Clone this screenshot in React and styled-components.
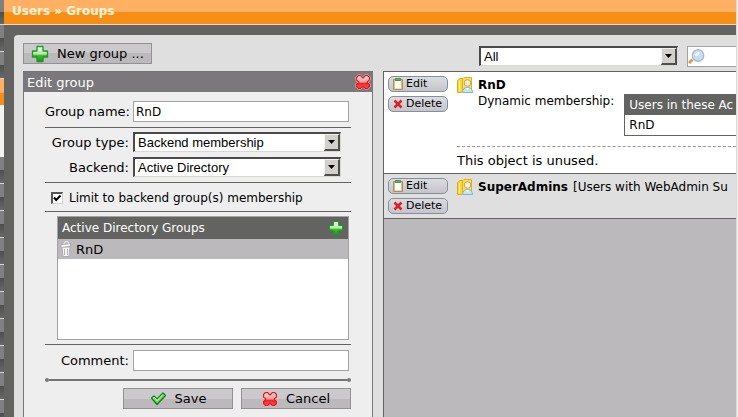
import React, { useState } from "react";
import styled, { createGlobalStyle } from "styled-components";

const GlobalStyle = createGlobalStyle`
  *, *::before, *::after { box-sizing: border-box; }
  html, body { margin: 0; background: #636361; overflow: hidden; }
  body, button, input, select { font-family: "DejaVu Sans", Verdana, sans-serif; font-size: 13px; color: #000; }
`;

const Page = styled.div`
  display: grid;
  grid-template-columns: 4px minmax(0, 1fr) 2px;
  height: 100vh;
`;
const Rail = styled.nav`
  display: flex;
  flex-direction: column;
  overflow: hidden;
`;
const RailTab = styled.span`
  flex: none;
  height: ${(p) => (p.$first ? "25px" : p.$active ? "26px" : "27px")};
  border-bottom: ${(p) => (p.$active ? "0" : "1px solid #d6d6d6")};
  background: ${(p) =>
    p.$active
      ? "linear-gradient(#ffb066 55%, #f78d14 55%)"
      : "linear-gradient(#808082 50%, #4e4e4e 50%, #686868)"};
`;
const RailGap = styled.span`
  flex: none;
  height: 52px;
  background: #f2f2f2;
`;
const Edge = styled.div`
  background: #f0f0ee;
  border-left: 1px solid #dcdcdc;
`;
const Column = styled.div`
  display: flex;
  flex-direction: column;
  overflow: hidden;
`;
const TitleBar = styled.header`
  flex: none;
  height: 25px;
  padding: 0 8px;
  border-bottom: 1px solid #e8d9c8;
  background: linear-gradient(#ffb062 12px, #f88f15 12px);
`;
const Title = styled.h1`
  margin: 0;
  font: bold 12px/22px "DejaVu Sans", sans-serif;
  color: #fff3da;
`;
const Main = styled.main`
  flex: 1;
  display: grid;
  grid-template-columns: 350px minmax(0, 1fr);
  grid-template-rows: 36px minmax(0, 1fr);
  column-gap: 10px;
  margin: 10px 0 0 10px;
  padding-left: 9px;
  background: #dfdfdf;
  border-top-left-radius: 4px;
`;
const Tools = styled.div`
  display: flex;
  align-items: flex-start;
  gap: 9px;
  padding: ${(p) => (p.$filters ? "11px 0 0 96px" : "8px 0 0")};
`;
const Button = styled.button`
  display: flex;
  align-items: center;
  justify-content: center;
  gap: 8px;
  height: 21px;
  width: ${(p) => (p.$wide ? "129px" : "110px")};
  padding: 0;
  border: 1px solid #929292;
  background: linear-gradient(#cbc9cb 50%, #bbb9bb 50%);
  white-space: nowrap;
  svg { flex: none; }
`;
const Panel = styled.form`
  display: flex;
  flex-direction: column;
  border: 1px solid #777;
  border-top-color: #757375;
  border-bottom: 0;
  background: #eee;
`;
const PanelHead = styled.div`
  display: flex;
  flex: none;
  align-items: center;
  justify-content: space-between;
  height: 20px;
  padding: 0 1px 0 3px;
  background: #7a787a;
  color: #fff;
`;
const IconButton = styled.button`
  display: flex;
  padding: 0;
  border: 0;
  background: none;
`;
const Fields = styled.div`
  display: flex;
  flex-direction: column;
  margin: 0 21px;
`;
const Section = styled.div`
  display: flex;
  flex-direction: column;
  gap: 5px;
  padding: ${(p) => p.$pad || "5px 0"};
  border-bottom: 1px solid #636361;
`;
const Field = styled.div`
  display: grid;
  grid-template-columns: 84px minmax(0, 1fr);
  align-items: center;
  column-gap: 4px;
  padding-top: ${(p) => (p.$last ? "5px" : "0")};
  padding-right: ${(p) => (p.$short ? "10px" : "2px")};
`;
const Label = styled.label`
  text-align: right;
  white-space: nowrap;
`;
const TextBox = styled.input`
  width: 100%;
  height: 21px;
  padding: 0 2px;
  border: 1px solid #a3a3a3;
  background: #fff;
  font-size: 12px;
`;
const SelectFrame = styled.span`
  position: relative;
  display: block;
  width: ${(p) => (p.$filter ? "199px" : "100%")};
  height: 20px;
  border: 1px solid #d8d8d4;
  border-top: 2px solid #4a4a4a;
  border-left: 2px solid #4a4a4a;
  background: #fff;
`;
const Select = styled.select`
  display: block;
  width: 100%;
  height: 100%;
  padding: 0 18px 0 3px;
  border: 0;
  background: transparent;
  appearance: none;
  font: 13px "Liberation Sans", Arial, sans-serif;
`;
const Arrow = styled.span`
  position: absolute;
  inset: 0 0 0 auto;
  width: 16px;
  display: flex;
  align-items: center;
  justify-content: center;
  border: 1px solid #f2f2f0;
  border-right: 2px solid #4e4e4e;
  border-bottom: 2px solid #4e4e4e;
  background: #d2d0cb;
  pointer-events: none;
`;
const CheckRow = styled.label`
  display: flex;
  align-items: center;
  gap: 6px;
  height: 18px;
  padding-left: 6px;
  font-size: 12px;
  white-space: nowrap;
`;
const CheckFrame = styled.span`
  display: grid;
  width: 12px;
  height: 12px;
  > * { grid-area: 1 / 1; }
`;
const Check = styled.input`
  width: 12px;
  height: 12px;
  margin: 0;
  appearance: none;
  background: #fff;
  border: 1px solid #d4d4d0;
  border-top: 2px solid #555;
  border-left: 2px solid #555;
  & + svg { visibility: hidden; pointer-events: none; }
  &:checked + svg { visibility: visible; }
`;
const ListBox = styled.div`
  min-height: 124px;
  margin: 0 2px 0 12px;
  border: 1px solid #a3a3a3;
  background: #fff;
`;
const ListHead = styled.div`
  display: flex;
  align-items: center;
  justify-content: space-between;
  height: 22px;
  padding: 0 4px;
  background: #636361;
  color: #fff;
  font-size: 12px;
`;
const ListRow = styled.div`
  display: flex;
  align-items: center;
  gap: 4px;
  height: 20px;
  padding-left: 2px;
  background: #bbb9bb;
`;
const Rule = styled.div`
  display: flex;
  align-items: center;
  height: 5px;
  margin-top: 6px;
  &::before, &::after {
    content: "";
    width: 4px;
    height: 4px;
    border-radius: 2px;
    background: #777;
  }
`;
const RuleLine = styled.span`
  flex: 1;
  height: 2px;
  background: #757575;
`;
const Actions = styled.div`
  display: flex;
  justify-content: flex-end;
  gap: 8px;
  padding-top: 6px;
`;
const Search = styled.label`
  display: flex;
  flex: 1;
  align-items: center;
  min-width: 0;
  height: 21px;
  border: 1px solid #a3a3a3;
  border-right: 0;
  background: #fff;
`;
const SearchInput = styled.input`
  flex: 1;
  min-width: 0;
  border: 0;
  outline: 0;
  background: none;
`;
const Results = styled.section`
  border: 1px solid #636361;
  border-right: 0;
  border-bottom: 0;
  background: #bbb9bb;
  overflow: hidden;
`;
const Item = styled.article`
  display: grid;
  grid-template-columns: 60px minmax(0, 1fr);
  column-gap: 9px;
  padding: 4px 0 4px 4px;
  border-bottom: 1px solid #636361;
  background: ${(p) => (p.$alt ? "#dfdfdf" : "#fff")};
`;
const ItemButtons = styled.div`
  display: flex;
  flex-direction: column;
  gap: 4px;
`;
const Pill = styled.button`
  display: flex;
  align-items: center;
  gap: 3px;
  height: 16px;
  padding: 0 4px;
  border: 1px solid #8390a0;
  border-radius: 5px;
  background: linear-gradient(#dcdce0, #c6c4ca);
  font-size: 11px;
  line-height: 12px;
`;
const ItemHead = styled.div`
  display: flex;
  align-items: center;
  gap: 5px;
  height: 17px;
  font-size: 12px;
  white-space: nowrap;
  svg { flex: none; }
`;
const Membership = styled.div`
  display: flex;
  gap: 10px;
  padding-left: 21px;
  font-size: 12px;
  white-space: nowrap;
`;
const MemberLabel = styled.span`
  line-height: 17px;
`;
const Members = styled.table`
  flex: 1;
  width: 0;
  min-width: 0;
  margin-top: 1px;
  border: 1px solid #636361;
  border-right: 0;
  border-spacing: 0;
  table-layout: fixed;
  th, td { height: 20px; padding: 0 0 0 4px; text-align: left; font-weight: normal; }
  th { background: #636361; color: #fff; }
`;
const Unused = styled.p`
  margin: 10px 0 0;
  padding-top: 5px;
  border-top: 1px dashed #999;
  line-height: 17px;
`;

const Plus = ({ size = 18 }) => (
  <svg width={size} height={size} viewBox="0 0 18 18" aria-hidden="true">
    <defs>
      <linearGradient id="plusFill" x2="0" y2="1">
        <stop offset="0" stopColor="#f4fff0" />
        <stop offset=".5" stopColor="#b5e8a4" />
        <stop offset=".6" stopColor="#42bb32" />
        <stop offset="1" stopColor="#129512" />
      </linearGradient>
    </defs>
    <path d="M6 1.500h6V6h4.500v6H12v4.500H6V12H1.500V6H6z" fill="url(#plusFill)" stroke="#24942a" strokeWidth="1.300" strokeLinejoin="round" />
  </svg>
);
const crossShape =
  "M3.500 1.500h2L8 4l2.500-2.500h2l2 2v2.500L12 8.200l2.500 2.300v2l-2 2h-2L8 12.500l-2.500 2h-2l-2-2v-2L4 8.200 1.500 6V3.500z";
const Cross = () => (
  <svg width="16" height="16" viewBox="0 0 16 16" aria-hidden="true">
    <defs>
      <linearGradient id="crossFill" x2="0" y2="1">
        <stop offset="0" stopColor="#ffdede" />
        <stop offset=".5" stopColor="#ff9a9a" />
        <stop offset=".6" stopColor="#f22525" />
        <stop offset="1" stopColor="#fb5151" />
      </linearGradient>
    </defs>
    <path d={crossShape} fill="none" stroke="#ffb8b8" strokeWidth="2.200" strokeLinejoin="round" />
    <path d={crossShape} fill="url(#crossFill)" stroke="#d51a20" strokeWidth="1.100" strokeLinejoin="round" />
  </svg>
);
const Tick = () => (
  <svg width="17" height="16" viewBox="0 0 17 16" aria-hidden="true">
    <path d="M1.500 7L4 5l3 3 6-6 2.500 2.500L7 13.500z" fill="#72dc55" stroke="#16791f" strokeWidth="1.300" strokeLinejoin="round" />
    <path d="M3 7l1.500-.5L7 9.500 13 3.500" fill="none" stroke="#d5ffca" />
  </svg>
);
const Clipboard = () => (
  <svg width="10" height="12" viewBox="0 0 10 12" aria-hidden="true">
    <path d="M.5 1.500h9v10h-9z" fill="#e0b884" stroke="#a8905f" />
    <path d="M2 3h6v7.500H2z" fill="#fafff4" />
    <path d="M2.500.5h5v2h-5z" fill="#6eab65" stroke="#4f8f57" />
  </svg>
);
const SmallX = () => (
  <svg width="10" height="10" viewBox="0 0 10 10" aria-hidden="true">
    <path d="M1.500 1.500l7 7M8.500 1.500l-7 7" stroke="#dc2028" strokeWidth="2.600" />
  </svg>
);
const GroupIcon = () => (
  <svg width="16" height="16" viewBox="0 0 16 16" aria-hidden="true">
    <path d="M.5 3.500L3 1.500h3V14l-1.500 1.500h-4z" fill="#ffd633" stroke="#dca90f" />
    <path d="M5.500 2L7 .5h7.500v13h-9z" fill="#ffe04f" stroke="#dfb121" />
    <path d="M2.500 4v10" stroke="#fff2a2" />
    <path d="M5.500 15.500c0-3.500 2-5 5-5s5 1.500 5 5z" fill="#c4e6ee" stroke="#82b5cb" />
    <circle cx="10.500" cy="6" r="3.300" fill="#fff0dc" stroke="#c89c66" />
    <path d="M9 11l1.500 2 1.500-2z" fill="#fff" />
  </svg>
);
const Trash = () => (
  <svg width="12" height="16" viewBox="0 0 12 16" aria-hidden="true">
    <path d="M2 6h8l-1 9.500H3z" fill="#f4f4f4" stroke="#b0b0b0" />
    <path d="M4.500 8v6M7.500 8v6" stroke="#b4b4b4" />
    <path d="M1 4l9.500-1.500v2.500L1 6.500z" fill="#fff" stroke="#a2a2a2" strokeWidth=".7" />
    <path d="M4 3l1-2 3-.5.5 2" fill="none" stroke="#f2f2f2" />
  </svg>
);
const Magnifier = () => (
  <svg width="18" height="18" viewBox="0 0 18 18" aria-hidden="true">
    <path d="M1 15l3.500-3.500" stroke="#e59c38" strokeWidth="3" />
    <circle cx="10" cy="7.500" r="5.700" fill="#c6def5" stroke="#b3b9c4" strokeWidth="1.400" />
    <path d="M7 8c0-3 2-4 5-4-1 3-2 4-5 4z" fill="#f3faff" />
  </svg>
);
const Dropdown = ({ id, label, filter, value }) => (
  <SelectFrame $filter={filter}>
    <Select id={id} aria-label={label} defaultValue={value}>
      <option>{value}</option>
    </Select>
    <Arrow>
      <svg width="7" height="4" viewBox="0 0 7 4" aria-hidden="true"><path d="M0 0h7L3.500 4z" /></svg>
    </Arrow>
  </SelectFrame>
);
const RowButtons = () => (
  <ItemButtons>
    <Pill type="button"><Clipboard />Edit</Pill>
    <Pill type="button"><SmallX />Delete</Pill>
  </ItemButtons>
);

export default function App() {
  const [limited, setLimited] = useState(true);
  return (
    <>
      <GlobalStyle />
      <Page>
        <Rail aria-label="Sections">
          <RailTab $first /><RailTab /><RailTab /><RailTab $active />
          <RailGap />
          {Array.from({ length: 12 }, (_, i) => <RailTab key={i} />)}
        </Rail>
        <Column>
          <TitleBar><Title>Users » Groups</Title></TitleBar>
          <Main>
            <Tools>
              <Button type="button" $wide><Plus />New group ...</Button>
            </Tools>
            <Tools $filters>
              <Dropdown label="Filter" filter value="All" />
              <Search><Magnifier /><SearchInput type="text" aria-label="Search" /></Search>
            </Tools>
            <Panel onSubmit={(e) => e.preventDefault()}>
              <PanelHead>
                Edit group
                <IconButton type="button" aria-label="Close"><Cross /></IconButton>
              </PanelHead>
              <Fields>
                <Section $pad="9px 0 5px">
                  <Field>
                    <Label htmlFor="name">Group name:</Label>
                    <TextBox id="name" defaultValue="RnD" />
                  </Field>
                </Section>
                <Section $pad="4px 0 5px">
                  <Field $short>
                    <Label htmlFor="type">Group type:</Label>
                    <Dropdown id="type" value="Backend membership" />
                  </Field>
                  <Field $short>
                    <Label htmlFor="backend">Backend:</Label>
                    <Dropdown id="backend" value="Active Directory" />
                  </Field>
                </Section>
                <Section $pad="6px 0 4px">
                  <CheckRow>
                    <CheckFrame>
                      <Check type="checkbox" checked={limited} onChange={(e) => setLimited(e.target.checked)} />
                      <svg width="12" height="12" viewBox="0 0 12 12" aria-hidden="true">
                        <path d="M3 5.500l2.200 2.500L9.500 3.500" fill="none" stroke="#000" strokeWidth="2" />
                      </svg>
                    </CheckFrame>
                    Limit to backend group(s) membership
                  </CheckRow>
                </Section>
                <Section $pad="4px 0">
                  <ListBox>
                    <ListHead>
                      Active Directory Groups
                      <IconButton type="button" aria-label="Add"><Plus size={16} /></IconButton>
                    </ListHead>
                    <ListRow>
                      <IconButton type="button" aria-label="Remove"><Trash /></IconButton>
                      RnD
                    </ListRow>
                  </ListBox>
                </Section>
                <Field $last>
                  <Label htmlFor="comment">Comment:</Label>
                  <TextBox id="comment" />
                </Field>
                <Rule><RuleLine /></Rule>
                <Actions>
                  <Button type="submit"><Tick />Save</Button>
                  <Button type="button"><Cross />Cancel</Button>
                </Actions>
              </Fields>
            </Panel>
            <Results>
              <Item>
                <RowButtons />
                <div>
                  <ItemHead><GroupIcon /><strong>RnD</strong></ItemHead>
                  <Membership>
                    <MemberLabel>Dynamic membership:</MemberLabel>
                    <Members>
                      <thead><tr><th>Users in these Ac</th></tr></thead>
                      <tbody><tr><td>RnD</td></tr></tbody>
                    </Members>
                  </Membership>
                  <Unused>This object is unused.</Unused>
                </div>
              </Item>
              <Item $alt>
                <RowButtons />
                <ItemHead><GroupIcon /><strong>SuperAdmins</strong>[Users with WebAdmin Su</ItemHead>
              </Item>
            </Results>
          </Main>
        </Column>
        <Edge />
      </Page>
    </>
  );
}
